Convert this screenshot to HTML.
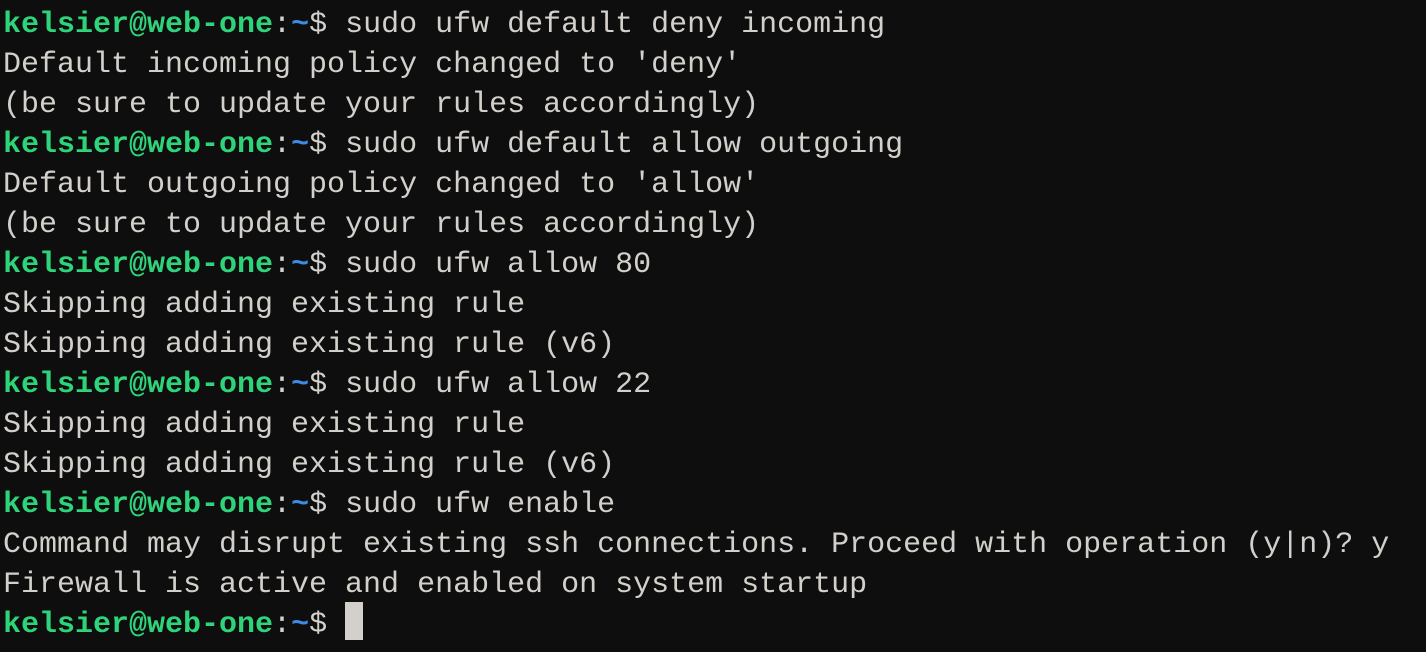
<!DOCTYPE html>
<html><head><style>
html,body{margin:0;padding:0;background:#0e0e0e;width:1426px;height:652px;overflow:hidden}
pre{margin:0;position:absolute;left:3px;top:5px;font-family:"Liberation Mono","DejaVu Sans Mono",monospace;font-size:30px;line-height:40px;color:#d3d0cb;letter-spacing:0}
.g{color:#2ed47a;font-weight:bold}.b{color:#3c8be6;font-weight:bold}
.c{display:inline-block;width:18px;height:38px;background:#d3d0cb;vertical-align:top;position:relative;top:-3px}
</style></head><body><pre><span class="g">kelsier@web-one</span>:<span class="b">~</span>$ sudo ufw default deny incoming
Default incoming policy changed to 'deny'
(be sure to update your rules accordingly)
<span class="g">kelsier@web-one</span>:<span class="b">~</span>$ sudo ufw default allow outgoing
Default outgoing policy changed to 'allow'
(be sure to update your rules accordingly)
<span class="g">kelsier@web-one</span>:<span class="b">~</span>$ sudo ufw allow 80
Skipping adding existing rule
Skipping adding existing rule (v6)
<span class="g">kelsier@web-one</span>:<span class="b">~</span>$ sudo ufw allow 22
Skipping adding existing rule
Skipping adding existing rule (v6)
<span class="g">kelsier@web-one</span>:<span class="b">~</span>$ sudo ufw enable
Command may disrupt existing ssh connections. Proceed with operation (y|n)? y
Firewall is active and enabled on system startup
<span class="g">kelsier@web-one</span>:<span class="b">~</span>$ <span class="c"></span></pre></body></html>
